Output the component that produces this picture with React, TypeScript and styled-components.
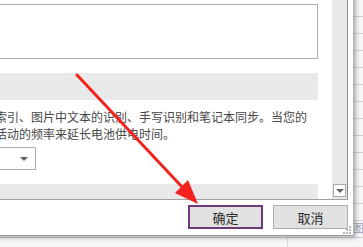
import styled, { createGlobalStyle } from "styled-components";

const GlobalStyle = createGlobalStyle`
  html, body {
    margin: 0;
    padding: 0;
    background: #ffffff;
  }
`;

const Page = styled.div`
  position: relative;
  width: 363px;
  height: 247px;
  overflow: hidden;
  font-family: "Noto Sans CJK SC", "Noto Sans", sans-serif;
  background-color: #f6f6f6;
  background-image: linear-gradient(
      to right,
      transparent 287px,
      #d6d6d6 287px,
      #d6d6d6 288px,
      transparent 288px
    ),
    repeating-linear-gradient(
      to bottom,
      transparent 0px,
      transparent 16px,
      #c9d2de 16px,
      #c9d2de 17px
    );
`;

const SheetText = styled.span`
  position: absolute;
  left: 352px;
  top: 219px;
  font-size: 12px;
  color: #9aa6ba;
`;

// the dialog window, its left and top lie outside the shot
const Dialog = styled.div`
  position: absolute;
  left: -40px;
  top: -20px;
  width: 394px;
  height: 256px;
  background: #ffffff;
  border-right: 1px solid #b4b4b4;
  border-bottom: 1px solid #9a9a9a;
  box-shadow: 2px 2px 4px rgba(0, 0, 0, 0.28);
  display: flex;
  flex-direction: column;
  padding-right: 5px;
  box-sizing: border-box;
`;

const Pane = styled.div`
  height: 220px;
  display: flex;
  border-right: 1px solid #8a8a8a;
  border-bottom: 1px solid #a0a0a0;
  box-sizing: border-box;
`;

const Content = styled.div`
  flex: 1;
  display: flex;
  flex-direction: column;
  padding: 24px 14px 0 0;
`;

const Box = styled.div`
  height: 55px;
  border: 1px solid #ababab;
  box-sizing: border-box;
  background: #ffffff;
`;

const Band = styled.div<{ $h: number; $top: number }>`
  height: ${(p) => p.$h}px;
  margin-top: ${(p) => p.$top}px;
  background: #e9e9e9;
`;

const Desc = styled.p`
  margin: 8px 0 0;
  padding-left: 35px;
  font-size: 12px;
  line-height: 17px;
  color: #474747;
  white-space: nowrap;
`;

const Select = styled.div`
  width: 76px;
  height: 23px;
  margin-top: 5px;
  border: 1px solid #acacac;
  box-sizing: border-box;
  display: flex;
  align-items: center;
  justify-content: flex-end;
  padding-right: 7px;
`;

const Caret = styled.span`
  width: 0;
  height: 0;
  border-left: 4px solid transparent;
  border-right: 4px solid transparent;
  border-top: 4px solid #606060;
`;

const Scrollbar = styled.div`
  width: 15px;
  background: #e8e8e8;
  display: flex;
  flex-direction: column;
  justify-content: flex-end;
  padding-bottom: 2px;
`;

const ScrollButton = styled.div`
  height: 13px;
  margin: 0 1px;
  background: #ffffff;
  border: 1px solid #a8a8a8;
  box-sizing: border-box;
  display: flex;
  align-items: center;
  justify-content: center;
`;

const Footer = styled.div`
  position: relative;
  flex: 1;
  display: flex;
  justify-content: flex-end;
  align-items: flex-start;
  gap: 10px;
  padding-top: 5px;
`;

const Button = styled.button<{ $primary?: boolean }>`
  width: 75px;
  height: 24px;
  padding: 0;
  background: #e1e1e1;
  border: ${(p) => (p.$primary ? "2px solid #6c3a7c" : "1px solid #adadad")};
  font-family: "Noto Sans CJK SC", sans-serif;
  font-size: 13px;
  color: #2b2b2b;
  box-sizing: border-box;
`;

const Grip = styled.svg`
  position: absolute;
  right: -4px;
  bottom: 0;
`;

const Annotation = styled.svg`
  position: absolute;
  left: 0;
  top: 0;
  pointer-events: none;
`;

export default function App() {
  return (
    <>
      <GlobalStyle />
      <Page>
        <SheetText>图</SheetText>
        <Dialog>
          <Pane>
            <Content>
              <Box />
              <Band $h={27} $top={14} />
              <Desc>
                索引、图片中文本的识别、手写识别和笔记本同步。当您的
                <br />
                活动的频率来延长电池供电时间。
              </Desc>
              <Select>
                <Caret />
              </Select>
              <Band $h={15} $top={14} />
            </Content>
            <Scrollbar>
              <ScrollButton>
                <Caret />
              </ScrollButton>
            </Scrollbar>
          </Pane>
          <Footer>
            <Button $primary>确定</Button>
            <Button>取消</Button>
            <Grip width="10" height="10" viewBox="0 0 10 10">
              <g fill="#b8b8b8">
                <rect x="7" y="1" width="2" height="2" />
                <rect x="4" y="4" width="2" height="2" />
                <rect x="7" y="4" width="2" height="2" />
                <rect x="1" y="7" width="2" height="2" />
                <rect x="4" y="7" width="2" height="2" />
                <rect x="7" y="7" width="2" height="2" />
              </g>
            </Grip>
          </Footer>
        </Dialog>
        <Annotation width="363" height="247" viewBox="0 0 363 247">
          <line
            x1="77"
            y1="75"
            x2="184"
            y2="189"
            stroke="#f3221c"
            strokeWidth="3"
            strokeLinecap="round"
          />
          <polygon points="198,204 175,193 188,180" fill="#f3221c" />
        </Annotation>
      </Page>
    </>
  );
}
